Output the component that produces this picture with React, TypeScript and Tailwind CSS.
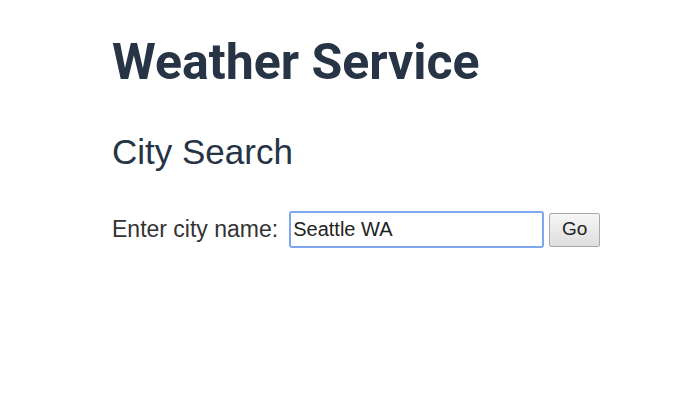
import React, { useState } from 'react';

export default function App() {
  const [city, setCity] = useState('Seattle WA');

  return (
    <div className="min-h-[400px] w-full bg-white font-['Liberation_Sans',Arial,sans-serif]">
      <div className="pl-[112px] pt-[32px]">
        <h1 className="font-['Roboto',sans-serif] text-[50px] font-bold leading-[60px] text-[#263445]">
          Weather Service
        </h1>

        <h2 className="mt-[40px] text-[35px] leading-[40px] text-[#263445]">City Search</h2>

        <form className="mt-[39px] flex items-center" onSubmit={(e) => e.preventDefault()}>
          <label htmlFor="city" className="mr-[11px] text-[23px] text-[#333]">
            Enter city name:
          </label>
          <input
            id="city"
            value={city}
            onChange={(e) => setCity(e.target.value)}
            className="h-[37px] w-[255px] rounded-[3px] border-2 border-[#7ea7ef] px-[2px] text-[20px] text-[#222] outline-none"
          />
          <button
            type="submit"
            className="ml-[5px] h-[34px] w-[51px] rounded-[2px] border border-[#a9a9a9] bg-gradient-to-b from-[#f6f6f6] to-[#dedede] text-[19px] text-[#222]"
          >
            Go
          </button>
        </form>
      </div>
    </div>
  );
}
